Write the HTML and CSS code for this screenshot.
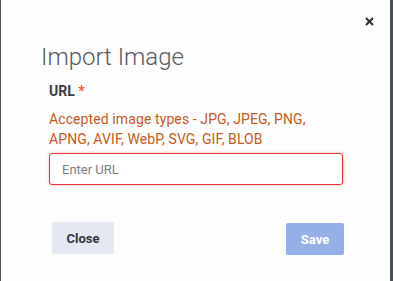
FILE: index.html
```html
<!DOCTYPE html>
<html lang="en">
<head>
  <meta charset="UTF-8">
  <title>Import Image</title>
  <link rel="stylesheet" href="styles.css">
</head>
<body>
  <div class="modal">
    <div class="modal-top">
      <button class="close-x" aria-label="Close">
        <svg width="9" height="9" viewBox="0 0 9 9"><path d="M1 1L8 8M8 1L1 8" stroke="#2b2f36" stroke-width="2"/></svg>
      </button>
    </div>
    <h2 class="title">Import Image</h2>
    <div class="body">
      <label class="label">URL <span class="req">*</span></label>
      <p class="hint">Accepted image types - JPG, JPEG, PNG, APNG, AVIF, WebP, SVG, GIF, BLOB</p>
      <input class="url-input" type="text" placeholder="Enter URL">
      <div class="actions">
        <button class="btn btn-close">Close</button>
        <button class="btn btn-save" disabled>Save</button>
      </div>
    </div>
  </div>
</body>
</html>
```

FILE: styles.css
```css
body {
  margin: 0;
  height: 281px;
  background: #4b4e53;
  font-family: Roboto, "Noto Sans", sans-serif;
  overflow: hidden;
}

.modal {
  margin-left: 1px;
  width: 389px;
  height: 281px;
  background: #fdfdfd;
  box-sizing: border-box;
}

.modal-top {
  display: flex;
  justify-content: flex-end;
  padding: 17px 16px 0 0;
}

.close-x {
  border: none;
  background: none;
  padding: 0;
  width: 9px;
  height: 9px;
  display: flex;
  cursor: pointer;
}

.title {
  margin: 15px 0 0 40px;
  font-size: 24px;
  font-weight: 300;
  color: #555a60;
  line-height: 32px;
}

.body {
  padding: 0 46px 0 48px;
}

.label {
  display: block;
  margin-top: 9px;
  font-size: 14px;
  font-weight: 700;
  color: #3a3d42;
  line-height: 18px;
}

.req {
  color: #f0552f;
}

.hint {
  margin: 9px 0 0 0;
  font-size: 14px;
  line-height: 20px;
  letter-spacing: 0.1px;
  color: #c75a1c;
}

.url-input {
  display: block;
  margin-top: 4px;
  width: 294px;
  height: 32px;
  box-sizing: border-box;
  border: 1px solid #e8353b;
  border-radius: 3px;
  box-shadow: 0 0 3px rgba(232, 53, 59, 0.35);
  padding: 0 12px;
  font-family: Roboto, sans-serif;
  font-size: 13px;
  color: #333;
  outline: none;
}

.url-input::placeholder {
  color: #7b7f85;
}

.actions {
  display: flex;
  justify-content: space-between;
  margin-top: 37px;
  padding: 0 0 0 3px;
}

.btn {
  border: none;
  border-radius: 2px;
  font-family: Roboto, sans-serif;
  font-size: 13px;
  font-weight: 700;
  cursor: pointer;
}

.btn-close {
  width: 62px;
  height: 32px;
  background: #e4e8f0;
  color: #32363c;
}

.btn-save {
  width: 58px;
  height: 32px;
  margin-top: 1px;
  background: #95b0e6;
  color: #fff;
}
```
